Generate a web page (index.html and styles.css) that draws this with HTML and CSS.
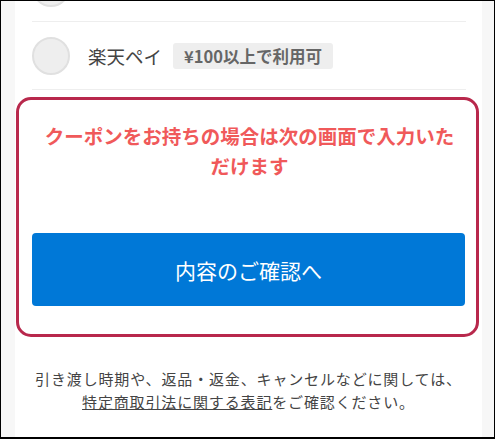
FILE: index.html
```html
<!DOCTYPE html>
<html lang="ja">
<head>
    <meta charset="UTF-8">
    <meta name="viewport" content="width=device-width, initial-scale=1.0">
    <title>お支払い方法</title>
    <link rel="stylesheet" href="styles.css">
</head>
<body>
    <div class="frame">
        <div class="panel">
            <ul class="options">
                <li class="option">
                    <span class="radio"></span>
                    <span class="tag-mark"></span>
                </li>
                <li class="option">
                    <span class="radio"></span>
                    <span class="option-name">楽天ペイ</span>
                    <span class="tag">¥100以上で利用可</span>
                </li>
            </ul>

            <div class="confirm-box">
                <p class="coupon-note">クーポンをお持ちの場合は次の画面で入力いただけます</p>
                <button type="button" class="confirm-btn">内容のご確認へ</button>
            </div>

            <p class="notice">
                引き渡し時期や、返品・返金、キャンセルなどに関しては、<br>
                <a href="#">特定商取引法に関する表記</a>をご確認ください。
            </p>
        </div>
    </div>
</body>
</html>
```

FILE: styles.css
```css
*,
*:before,
*:after {
    padding: 0;
    margin: 0;
    box-sizing: border-box;
}
body {
    font-family: "Noto Sans CJK JP", "Noto Sans", sans-serif;
    background-color: #ffffff;
    color: #444444;
}
.frame {
    width: 495px;
    height: 439px;
    border: 1px solid #000000;
    border-bottom-width: 2px;
    background-color: #f7f7f7;
    overflow: hidden;
}
.panel {
    display: flow-root;
    margin: 0 12px 0 14px;
    height: 100%;
    background-color: #ffffff;
}
.options {
    list-style: none;
    margin-top: -47px;
}
.option {
    display: flex;
    align-items: center;
    height: 68px;
    margin: 0 16px 0 17px;
    border-bottom: 1px solid #eeeeee;
}
.radio {
    width: 38px;
    height: 38px;
    border-radius: 50%;
    background-color: #eeeeee;
    border: 2px solid #e0e0e0;
    flex-shrink: 0;
}
.option-name {
    margin-left: 18px;
    font-size: 18.5px;
    color: #444444;
}
.tag {
    margin-left: 11px;
    padding: 0 11px;
    height: 26px;
    line-height: 26px;
    border-radius: 3px;
    background-color: #eeeeee;
    color: #666666;
    font-size: 16.5px;
    font-weight: 700;
}
/* bottom edge of the badge on the row scrolled out of view */
.tag-mark {
    width: 34px;
    height: 26px;
    margin-left: 150px;
    border-radius: 8px;
    background-color: #f9c6d3;
}
.confirm-box {
    margin: 7px 3px 0 1px;
    border: 3px solid #b8284c;
    border-radius: 15px;
    padding: 21px 11px 28px 13px;
}
.coupon-note {
    padding: 0 7px 0 9px;
    color: #f0595a;
    font-size: 19.5px;
    font-weight: 700;
    line-height: 30px;
    text-align: center;
}
.confirm-btn {
    display: block;
    width: 100%;
    height: 73px;
    margin-top: 52px;
    border: none;
    border-radius: 4px;
    background-color: #0078d7;
    color: #ffffff;
    font-family: inherit;
    font-size: 21px;
    cursor: pointer;
}
.notice {
    margin-top: 30px;
    font-size: 15px;
    letter-spacing: 0.85px;
    line-height: 23px;
    text-align: center;
    color: #444444;
}
.notice a {
    color: #444444;
    text-decoration: underline;
}
```
